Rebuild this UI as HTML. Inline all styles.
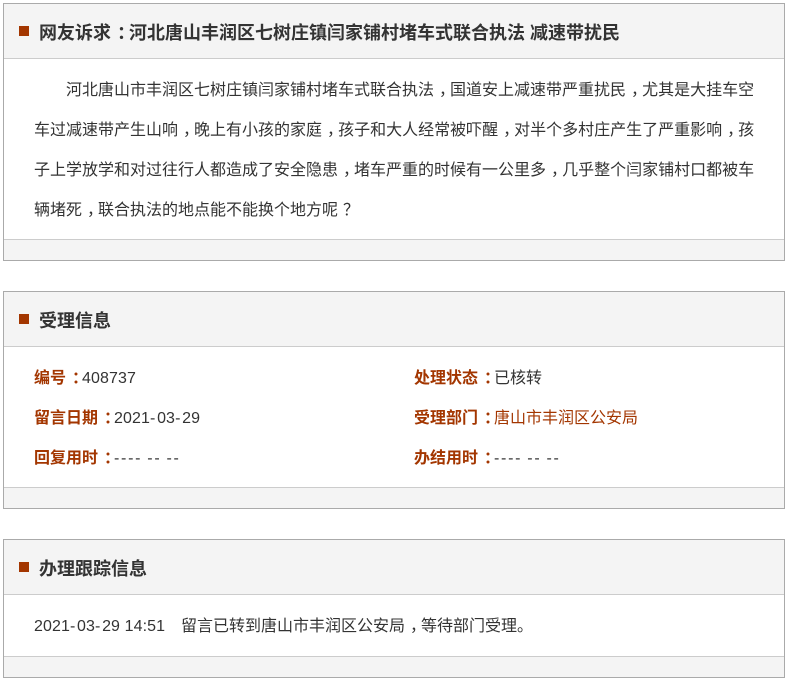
<!DOCTYPE html>
<html lang="zh">
<head>
<meta charset="utf-8">
<title>网友诉求</title>
<style>
html,body{margin:0;padding:0;background:#fff;}
body{width:788px;height:683px;position:relative;overflow:hidden;font-family:"Liberation Sans","Noto Sans CJK SC",sans-serif;font-size:16px;color:#333;}
.box{position:absolute;left:3px;width:780px;border:1px solid #aaa;background:#fff;}
.hd{position:absolute;left:0;top:0;right:0;height:54px;background:#f4f4f4;border-bottom:1px solid #ccc;}
.ft{position:absolute;left:0;bottom:0;right:0;height:20px;background:#f4f4f4;border-top:1px solid #ccc;}
.sq{position:absolute;left:15px;top:22px;width:10px;height:10px;background:#a33600;}
.tt{position:absolute;left:35px;top:0;line-height:58px;font-size:18px;font-weight:bold;color:#333;white-space:nowrap;}
.t{position:absolute;white-space:nowrap;line-height:40px;letter-spacing:0;}
b{font-weight:bold;color:#a33600;}
.lnk{color:#a33600;}
i{font-style:normal;position:relative;left:5px;}
i.c{left:6px;}
u{text-decoration:none;letter-spacing:1.7px;}
u.w{word-spacing:-1px;}
.n{letter-spacing:.1px;}
</style>
</head>
<body>
<div class="box" style="top:3px;height:256px;">
  <div class="hd"><div class="sq"></div><div class="tt">网友诉求<i class="c">：</i>河北唐山丰润区七树庄镇闫家铺村堵车式联合执法 减速带扰民</div></div>
  <div class="t" style="left:62px;top:67px;">河北唐山市丰润区七树庄镇闫家铺村堵车式联合执法<i>，</i>国道安上减速带严重扰民<i>，</i>尤其是大挂车空</div>
  <div class="t" style="left:30px;top:107px;">车过减速带产生山响<i>，</i>晚上有小孩的家庭<i>，</i>孩子和大人经常被吓醒<i>，</i>对半个多村庄产生了严重影响<i>，</i>孩</div>
  <div class="t" style="left:30px;top:147px;">子上学放学和对过往行人都造成了安全隐患<i>，</i>堵车严重的时候有一公里多<i>，</i>几乎整个闫家铺村口都被车</div>
  <div class="t" style="left:30px;top:187px;">辆堵死<i>，</i>联合执法的地点能不能换个地方呢<i>？</i></div>
  <div class="ft"></div>
</div>
<div class="box" style="top:291px;height:216px;">
  <div class="hd"><div class="sq"></div><div class="tt">受理信息</div></div>
  <div class="t" style="left:30px;top:67px;"><b>编号<i class="c">：</i></b><span class="n">408737</span></div>
  <div class="t" style="left:410px;top:67px;"><b>处理状态<i class="c">：</i></b>已核转</div>
  <div class="t" style="left:30px;top:107px;"><b>留言日期<i class="c">：</i></b><span class="n">2021<u>-</u>03<u>-</u>29</span></div>
  <div class="t" style="left:410px;top:107px;"><b>受理部门<i class="c">：</i></b><span class="lnk">唐山市丰润区公安局</span></div>
  <div class="t" style="left:30px;top:147px;"><b>回复用时<i class="c">：</i></b><u class="w">---- -- --</u></div>
  <div class="t" style="left:410px;top:147px;"><b>办结用时<i class="c">：</i></b><u class="w">---- -- --</u></div>
  <div class="ft"></div>
</div>
<div class="box" style="top:539px;height:137px;">
  <div class="hd"><div class="sq"></div><div class="tt">办理跟踪信息</div></div>
  <div class="t" style="left:30px;top:67px;"><span class="n">2021<u>-</u>03<u>-</u>29 14:51</span></div>
  <div class="t" style="left:177px;top:67px;">留言已转到唐山市丰润区公安局<i>，</i>等待部门受理。</div>
  <div class="ft"></div>
</div>
</body>
</html>
